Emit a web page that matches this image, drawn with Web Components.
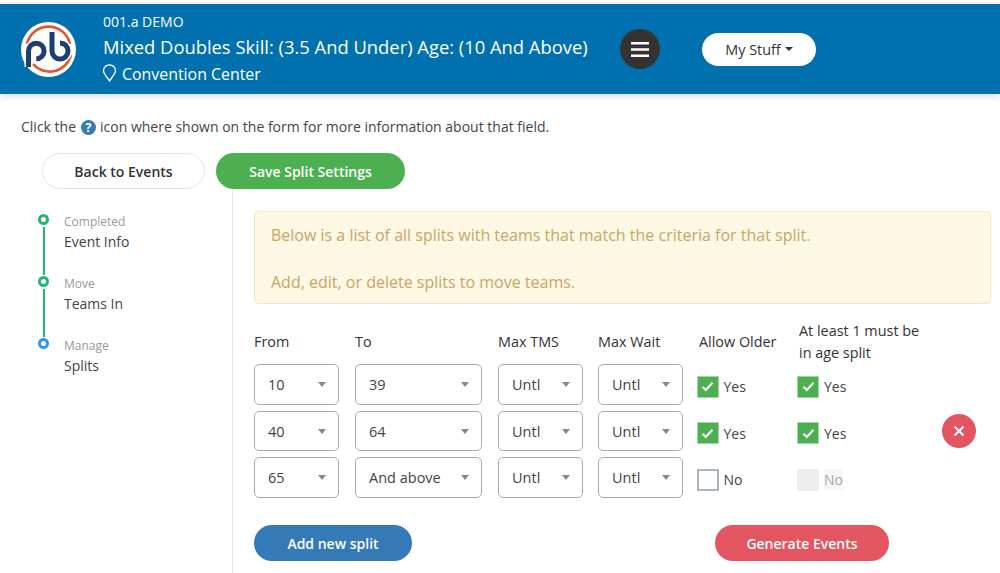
<!DOCTYPE html>
<html>
<head>
<meta charset="utf-8">
<style>
  html, body { margin: 0; padding: 0; background: #fff; }
  body { width: 1000px; height: 573px; overflow: hidden; font-family: "Open Sans", "Noto Sans", sans-serif; color: #333; }
</style>
</head>
<body>
<app-page></app-page>

<template id="app-header">
  <style>
    :host { display: flex; align-items: center; height: 90px; margin-top: 4px; background: #0071ae; color: #fff; box-shadow: 0 2px 8px rgba(0,0,0,.15); padding-left: 21px; box-sizing: border-box; }
    .logo { width: 55px; height: 55px; flex: none; margin-right: 27px; }
    .info { width: 517px; flex: none; }
    .code { font-size: 14px; line-height: 20px; }
    .title { font-size: 18.37px; line-height: 30px; }
    .place { display: flex; align-items: center; gap: 5px; font-size: 15.9px; line-height: 25px; }
    .place svg { margin-top: -2px; margin-left: -1px; }
    .menu { width: 40px; height: 40px; border-radius: 50%; background: #333; flex: none; display: flex; align-items: center; justify-content: center; margin-right: 42px; }
    .stuff { width: 114px; height: 33px; border-radius: 17px; background: #fff; color: #333; font-size: 14.4px; font-weight: 500; display: flex; align-items: center; justify-content: center; gap: 4px; }
    .caret { width: 0; height: 0; border: 4.5px solid transparent; border-top-color: #333; border-bottom: 0; }
  </style>
  <svg class="logo" viewBox="0 0 55 55">
    <circle cx="27.500" cy="27.500" r="27.500" fill="#fff"/>
    <path d="M6 22A22 22 0 0 1 49 22" fill="none" stroke="#e8522f" stroke-width="2.600"/>
    <path d="M12 42A22 22 0 0 0 50 33" fill="none" stroke="#e8522f" stroke-width="2.600"/>
    <path d="M7.500 45V29a7.800 7.800 0 1 1 7.800 7.800" fill="none" stroke="#fff" stroke-width="8"/>
    <path d="M31 10V29a8 8 0 1 0 8-8" fill="none" stroke="#fff" stroke-width="8"/>
    <path d="M7.500 45V29a7.800 7.800 0 1 1 7.800 7.800" fill="none" stroke="#1c3f6e" stroke-width="5"/>
    <path d="M31 10V29a8 8 0 1 0 8-8" fill="none" stroke="#1c3f6e" stroke-width="5"/>
  </svg>
  <div class="info">
    <div class="code"><slot name="code"></slot></div>
    <div class="title"><slot name="title"></slot></div>
    <div class="place">
      <svg width="15" height="18" viewBox="0 0 15 18"><path d="M7.500 16.800C5 13 1.500 9.800 1.500 6.800a6 6 0 0 1 12 0c0 3-3.500 6.200-6 10z" fill="none" stroke="#fff" stroke-width="1.300"/></svg>
      <slot name="place"></slot>
    </div>
  </div>
  <div class="menu">
    <svg width="18" height="15" viewBox="0 0 18 15"><path d="M0 1.200H18M0 7.500H18M0 13.800H18" stroke="#fff" stroke-width="2.400"/></svg>
  </div>
  <div class="stuff"><slot name="stuff"></slot><span class="caret"></span></div>
</template>

<template id="round-button">
  <style>
    :host { display: inline-flex; align-items: center; justify-content: center; height: 36px; border-radius: 18px; font-size: 14px; font-weight: 600; box-sizing: border-box; background: var(--bg, #fff); color: var(--fg, #fff); border: var(--line, 0); width: var(--w, auto); }
  </style>
  <slot></slot>
</template>

<template id="step-item">
  <style>
    :host { display: grid; grid-template-columns: 11px 1fr; column-gap: 15px; height: 62px; }
    .rail { display: flex; flex-direction: column; align-items: center; box-sizing: border-box; height: 62px; }
    .dot { width: 11px; height: 11px; border: 3px solid var(--c, #21b573); border-radius: 50%; box-sizing: border-box; flex: none; }
    .bar { width: 2px; flex: 1; background: #21b573; margin: 2px 0 1px; }
    :host([last]) .bar { display: none; }
    .small { font-size: 12px; line-height: 16px; color: #999; margin-top: -.500px; }
    .main { font-size: 14px; line-height: 24px; color: #444; }
  </style>
  <div class="rail"><span class="dot"></span><span class="bar"></span></div>
  <div>
    <div class="small"><slot name="small"></slot></div>
    <div class="main"><slot name="main"></slot></div>
  </div>
</template>

<template id="select-box">
  <style>
    :host { display: flex; align-items: center; justify-content: space-between; width: var(--w, 85px); height: 40.5px; box-sizing: border-box; border: 1px solid #aaa; border-radius: 5px; padding: 1px 12px 0 13px; font-size: 14.5px; color: #444; background: #fff; }
    .arrow { width: 0; height: 0; border: 4px solid transparent; border-top: 5px solid #888; border-bottom: 0; }
  </style>
  <slot></slot><span class="arrow"></span>
</template>

<template id="check-box">
  <style>
    :host { display: flex; align-items: center; gap: 5px; font-size: 14px; color: #444; height: 40.5px; padding-top: 5px; box-sizing: border-box; }
    .box { width: 22px; height: 22px; box-sizing: border-box; background: #4caf50; border: 1px solid #a5d6a7; display: flex; align-items: center; justify-content: center; }
    :host([off]) .box { background: #fff; border: 2px solid #a9b4bf; }
    :host([off]) svg { display: none; }
    :host([disabled]) .box { background: #eee; border: 0; }
    :host([disabled]) .text { background: #f5f5f5; color: #aaa; padding: 1px 0; }
  </style>
  <span class="box"><svg width="13" height="11" viewBox="0 0 13 11"><path d="M1.500 5.800 4.800 9 11.500 1.800" fill="none" stroke="#fff" stroke-width="2"/></svg></span>
  <span class="text"><slot></slot></span>
</template>

<template id="split-table">
  <style>
    :host { display: grid; grid-template-columns: 101px 143px 100px 98.500px 100.500px 145px 34px; grid-template-rows: 44px; grid-auto-rows: 46.500px; align-items: start; font-size: 14.400px; font-weight: 500; color: #333; }
    .head { line-height: 22px; align-self: center; }
    .older { padding-left: 2.500px; }
    .tall { padding-left: 2px; white-space: nowrap; }
  </style>
  <div class="head">From</div><div class="head">To</div><div class="head">Max TMS</div><div class="head">Max Wait</div><div class="head older">Allow Older</div><div class="head tall">At least 1 must be<br>in age split</div><div></div>
  <slot></slot>
</template>

<template id="remove-button">
  <style>
    :host { display: flex; width: 34px; height: 34px; margin-top: 3px; border-radius: 50%; background: #e35561; align-items: center; justify-content: center; }
  </style>
  <svg width="12" height="12" viewBox="0 0 12 12"><path d="M1.500 1.500 10.500 10.500M10.500 1.500 1.500 10.500" stroke="#fff" stroke-width="2"/></svg>
</template>

<template id="app-page">
  <style>
    :host { display: block; }
    .hint { padding: 23px 0 0 21px; font-size: 14px; line-height: 20px; color: #444; display: flex; align-items: center; gap: 4.500px; }
    .actions { display: flex; gap: 11px; padding: 16px 0 0 42px; }
    .body { display: grid; grid-template-columns: 194px 1fr; margin-left: 38px; }
    .steps { padding-top: 25px; }
    .content { border-left: 1px solid #e5e5e5; padding: 21px 9px 0 21px; height: 384px; box-sizing: border-box; margin-top: 1px; }
    .alert { height: 93px; box-sizing: border-box; background: #fdf8e3; border: 1px solid #f0e9c6; border-radius: 4px; padding: 12px 16px; font-size: 16px; line-height: 23.250px; color: #c9a566; }
    .alert p { margin: 0 0 23.250px; }
    .table { margin-top: 16px; }
    .bottom { display: flex; justify-content: space-between; width: 635px; margin-top: 21.500px; }
  </style>
  <div class="hint">Click the
    <svg width="15" height="15" viewBox="0 0 15 15"><circle cx="7.500" cy="7.500" r="7.500" fill="#337ab7"/><text x="7.500" y="12" text-anchor="middle" font-size="12.500" font-weight="700" fill="#fff" font-family="Open Sans">?</text></svg>
    icon where shown on the form for more information about that field.</div>
  <div class="actions">
    <round-button style="--w:163px;--fg:#333;--line:1px solid #e5e5e5">Back to Events</round-button>
    <round-button style="--w:189px;--bg:#4caf50">Save Split Settings</round-button>
  </div>
  <div class="body">
    <div class="steps"><slot name="steps"></slot></div>
    <div class="content">
      <div class="alert">
        <p><slot name="alert1"></slot></p>
        <p><slot name="alert2"></slot></p>
      </div>
      <div class="table"><slot name="table"></slot></div>
      <div class="bottom"><slot name="bottom"></slot></div>
    </div>
  </div>
</template>

<script>
  // small helper, every element just clones its template
  function define(name) {
    customElements.define(name, class extends HTMLElement {
      constructor() {
        super();
        this.attachShadow({ mode: "open" });
        this.shadowRoot.appendChild(document.getElementById(name).content.cloneNode(true));
      }
    });
  }
  ["app-header", "round-button", "step-item", "select-box", "check-box", "split-table", "remove-button"].forEach(define);

  class AppPage extends HTMLElement {
    constructor() {
      super();
      this.attachShadow({ mode: "open" });
      const header = document.createElement("app-header");
      header.innerHTML = `<span slot="code">001.a DEMO</span>
        <span slot="title">Mixed Doubles Skill: (3.5 And Under) Age: (10 And Above)</span>
        <span slot="place">Convention Center</span>
        <span slot="stuff">My Stuff</span>`;
      this.shadowRoot.appendChild(header);
      this.shadowRoot.appendChild(document.getElementById("app-page").content.cloneNode(true));
    }
    connectedCallback() {
      const rows = [
        ["10", "39", false, false, false],
        ["40", "64", false, false, true],
        ["65", "And above", true, true, false]
      ];
      let cells = "";
      rows.forEach(r => {
        cells += `<select-box>${r[0]}</select-box><select-box style="--w:127px">${r[1]}</select-box><select-box>Untl</select-box><select-box>Untl</select-box>`;
        cells += r[2] ? `<check-box off>No</check-box>` : `<check-box>Yes</check-box>`;
        cells += r[3] ? `<check-box off disabled>No</check-box>` : `<check-box>Yes</check-box>`;
        cells += r[4] ? `<remove-button></remove-button>` : `<div></div>`;
      });
      this.innerHTML = `
        <step-item slot="steps"><span slot="small">Completed</span><span slot="main">Event Info</span></step-item>
        <step-item slot="steps"><span slot="small">Move</span><span slot="main">Teams In</span></step-item>
        <step-item slot="steps" last style="--c:#2b97f3"><span slot="small">Manage</span><span slot="main">Splits</span></step-item>
        <span slot="alert1">Below is a list of all splits with teams that match the criteria for that split.</span>
        <span slot="alert2">Add, edit, or delete splits to move teams.</span>
        <split-table slot="table">${cells}</split-table>
        <round-button slot="bottom" style="--w:158px;--bg:#337ab7">Add new split</round-button>
        <round-button slot="bottom" style="--w:174px;--bg:#e35561">Generate Events</round-button>`;
    }
  }
  customElements.define("app-page", AppPage);
</script>
</body>
</html>
